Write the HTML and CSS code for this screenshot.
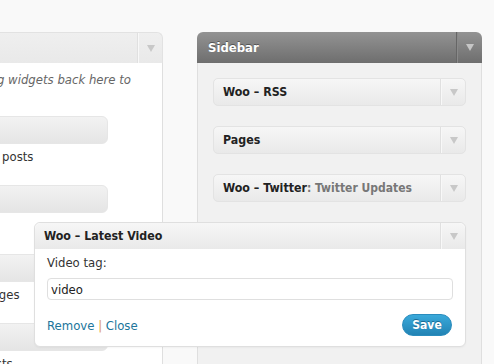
FILE: index.html
```html
<html>
<head>
<title>Widgets</title>
<link rel="stylesheet" href="styles.css">
</head>
<body>
<div class="widgets-page">

  <div class="available">
    <div class="available-head">
      <span class="toggle"><span class="arrow"></span></span>
    </div>
    <div class="available-body">
      <p class="intro">Drag widgets back here to</p>
      <div class="widget-list">
        <div class="item">
          <div class="item-bar"></div>
          <p class="item-desc">Recent posts</p>
        </div>
        <div class="item">
          <div class="item-bar"></div>
          <p class="item-desc">Tags</p>
        </div>
        <div class="item">
          <div class="item-bar"></div>
          <p class="item-desc">Site pages</p>
        </div>
        <div class="item">
          <div class="item-bar"></div>
          <p class="item-desc">Top posts</p>
        </div>
      </div>
    </div>
  </div>

  <div class="sidebar">
    <div class="sidebar-head">
      <h3>Sidebar</h3>
      <span class="toggle"><span class="arrow"></span></span>
    </div>
    <div class="sidebar-body">

      <div class="widget">
        <div class="widget-top">
          <h4>Woo &ndash; RSS</h4>
          <span class="toggle"><span class="arrow"></span></span>
        </div>
      </div>

      <div class="widget">
        <div class="widget-top">
          <h4>Pages</h4>
          <span class="toggle"><span class="arrow"></span></span>
        </div>
      </div>

      <div class="widget">
        <div class="widget-top">
          <h4>Woo &ndash; Twitter<span class="in-title">: Twitter Updates</span></h4>
          <span class="toggle"><span class="arrow"></span></span>
        </div>
      </div>

      <div class="widget open">
        <div class="widget-top">
          <h4>Woo &ndash; Latest Video</h4>
          <span class="toggle"><span class="arrow"></span></span>
        </div>
        <div class="widget-inside">
          <label for="video-tag">Video tag:</label>
          <input type="text" id="video-tag" value="video" />
          <div class="widget-control">
            <span class="links"><a href="#">Remove</a> <span class="sep">|</span> <a href="#">Close</a></span>
            <button type="button" class="save">Save</button>
          </div>
        </div>
      </div>

    </div>
  </div>

</div>
</body>
</html>
```

FILE: styles.css
```css
html, body {
  margin: 0;
  height: 100%;
  overflow: hidden;
}

body {
  background: #f9f9f9;
  font-family: "DejaVu Sans Condensed", "DejaVu Sans", sans-serif;
  font-size: 13px;
  color: #333;
}

.widgets-page {
  display: flex;
  height: 100%;
  padding-top: 32px;
  box-sizing: border-box;
}

/* left column, cut off by the window edge */
.available {
  display: flex;
  flex-direction: column;
  flex-shrink: 0;
  width: 313px;
  margin-left: -150px;
}

.available-head {
  display: flex;
  flex-shrink: 0;
  justify-content: flex-end;
  height: 30px;
  background: linear-gradient(to bottom, #efefef, #e9e9e9);
  border-top: 1px solid #e2e2e2;
  border-right: 1px solid #e2e2e2;
  border-top-right-radius: 6px;
}

.available-body {
  flex: 1;
  overflow: hidden;
  background: #fff;
  border-right: 1px solid #dfdfdf;
}

.intro {
  margin: 8px 0 0;
  padding-left: 126px;
  font-style: italic;
  color: #666;
  line-height: 17px;
  white-space: nowrap;
}

.widget-list {
  margin-top: 28px;
  padding-left: 108px;
}

.item {
  height: 69px;
}

.item-bar {
  width: 148px;
  height: 26px;
  border: 1px solid #e6e6e6;
  border-radius: 6px;
  background: linear-gradient(to bottom, #f2f2f2, #e5e5e5);
}

.item-desc {
  margin: 4px 0 0;
  line-height: 17px;
  white-space: nowrap;
}

/* toggle arrows */
.toggle {
  display: flex;
  align-items: center;
  justify-content: center;
  width: 23px;
  border-left: 1px solid #f8f8f8;
  box-shadow: -1px 0 0 #e0e0e0;
}

.arrow {
  width: 0;
  height: 0;
  border-left: 4px solid transparent;
  border-right: 4px solid transparent;
  border-top: 7px solid #c8c8c8;
}

/* sidebar */
.sidebar {
  display: flex;
  flex-direction: column;
  flex-shrink: 0;
  width: 285px;
  margin-left: 34px;
}

.sidebar-head {
  display: flex;
  flex-shrink: 0;
  justify-content: space-between;
  height: 31px;
  background: linear-gradient(to bottom, #939393, #6e6e6e);
  border-radius: 6px 6px 0 0;
}

.sidebar-head h3 {
  margin: 0;
  padding-left: 11px;
  line-height: 31px;
  font-size: 13px;
  font-weight: bold;
  color: #fff;
  text-shadow: 0 -1px 0 #555;
}

.sidebar-head .toggle {
  width: 25px;
  border-left: 1px solid #666;
  box-shadow: inset 1px 0 0 #8a8a8a;
}

.sidebar-head .arrow {
  border-top-color: #c6c6c6;
}

.sidebar-body {
  flex: 1;
  background: #f1f1f1;
  border-left: 1px solid #dfdfdf;
  border-right: 1px solid #dfdfdf;
  padding: 15px 15px 0;
}

.widget {
  margin-bottom: 20px;
}

.widget-top {
  display: flex;
  justify-content: space-between;
  height: 26px;
  border: 1px solid #e3e3e3;
  border-radius: 5px;
  background: linear-gradient(to bottom, #f6f6f6, #e9e9e9);
}

.widget-top h4 {
  margin: 0;
  padding-left: 9px;
  line-height: 26px;
  font-size: 12.3px;
  font-weight: bold;
  color: #222;
}

.in-title {
  font-size: 12px;
  color: #777;
}

/* the opened widget grows to the left over the other column */
.widget.open {
  position: relative;
  z-index: 1;
  margin-left: -179px;
  background: #fff;
  border: 1px solid #dfdfdf;
  border-radius: 6px;
  box-shadow: 0 1px 2px rgba(0,0,0,.04);
}

.widget.open .widget-top {
  border: none;
  border-radius: 6px 6px 0 0;
}

.widget-inside {
  padding: 6px 12px 10px;
}

.widget-inside label {
  display: block;
  line-height: 16px;
  margin-bottom: 7px;
}

.widget-inside input {
  display: block;
  width: 100%;
  height: 22px;
  box-sizing: border-box;
  border: 1px solid #dfdfdf;
  border-radius: 4px;
  padding: 0 3px;
  font-family: inherit;
  font-size: 13px;
  color: #222;
  background: #fff;
}

.widget-control {
  display: flex;
  justify-content: space-between;
  align-items: center;
  margin-top: 14px;
}

.links a {
  color: #21759b;
  text-decoration: none;
}

.links .sep {
  color: #dd9a55;
}

.save {
  width: 50px;
  height: 22px;
  margin-right: 1px;
  border: 1px solid #2a8cbd;
  border-radius: 11px;
  background: linear-gradient(to bottom, #3aa9da, #2283b4);
  color: #fff;
  font-family: inherit;
  font-size: 12px;
  font-weight: bold;
  text-shadow: 0 -1px 0 #1b6a93;
  padding: 0;
  cursor: pointer;
}
```
